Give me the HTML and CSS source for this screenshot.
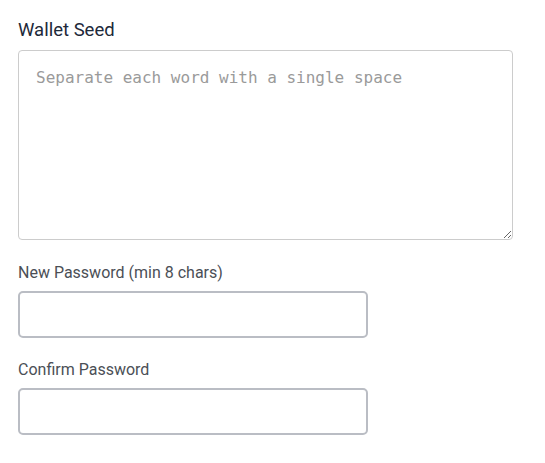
FILE: index.html
```html
<!DOCTYPE html>
<html>
<head>
<meta charset="utf-8">
<link rel="stylesheet" href="styles.css">
</head>
<body>
<form class="form">
  <div class="field seed">
    <label class="label-main" for="seed">Wallet Seed</label>
    <textarea id="seed" class="seed-input" placeholder="Separate each word with a single space"></textarea>
  </div>
  <div class="field pw">
    <label class="label" for="pw1">New Password (min 8 chars)</label>
    <input id="pw1" class="pw-input" type="password">
  </div>
  <div class="field pw">
    <label class="label" for="pw2">Confirm Password</label>
    <input id="pw2" class="pw-input" type="password">
  </div>
</form>
</body>
</html>
```
FILE: styles.css
```css
html, body {
  margin: 0;
  padding: 0;
  background: #fff;
}
body {
  font-family: Roboto, "Liberation Sans", sans-serif;
}
.form {
  display: flex;
  flex-direction: column;
  padding: 19px 32px 0 18px;
}
.field {
  display: flex;
  flex-direction: column;
}
.label-main {
  font-size: 18.5px;
  line-height: 22px;
  color: #1d2939;
  margin-bottom: 9px;
}
.seed-input {
  box-sizing: border-box;
  width: 495px;
  height: 190px;
  border: 1px solid #cccccc;
  border-radius: 4px;
  padding: 16px 17px;
  font-family: "DejaVu Sans Mono", monospace;
  font-size: 16px;
  line-height: 22px;
  color: #333;
  resize: vertical;
  outline: none;
  margin: 0;
}
.seed-input::placeholder {
  color: #9a9a9a;
}
.pw {
  margin-top: 22px;
}
.pw + .pw {
  margin-top: 21px;
}
.label {
  font-size: 16px;
  line-height: 20px;
  padding-top: 1px;
  color: #4b4f56;
  margin-bottom: 8px;
}
.pw-input {
  box-sizing: border-box;
  width: 350px;
  height: 47px;
  border: 2px solid #babdc4;
  border-radius: 5px;
  margin: 0;
  padding: 0 12px;
  outline: none;
  font-size: 16px;
}
```
